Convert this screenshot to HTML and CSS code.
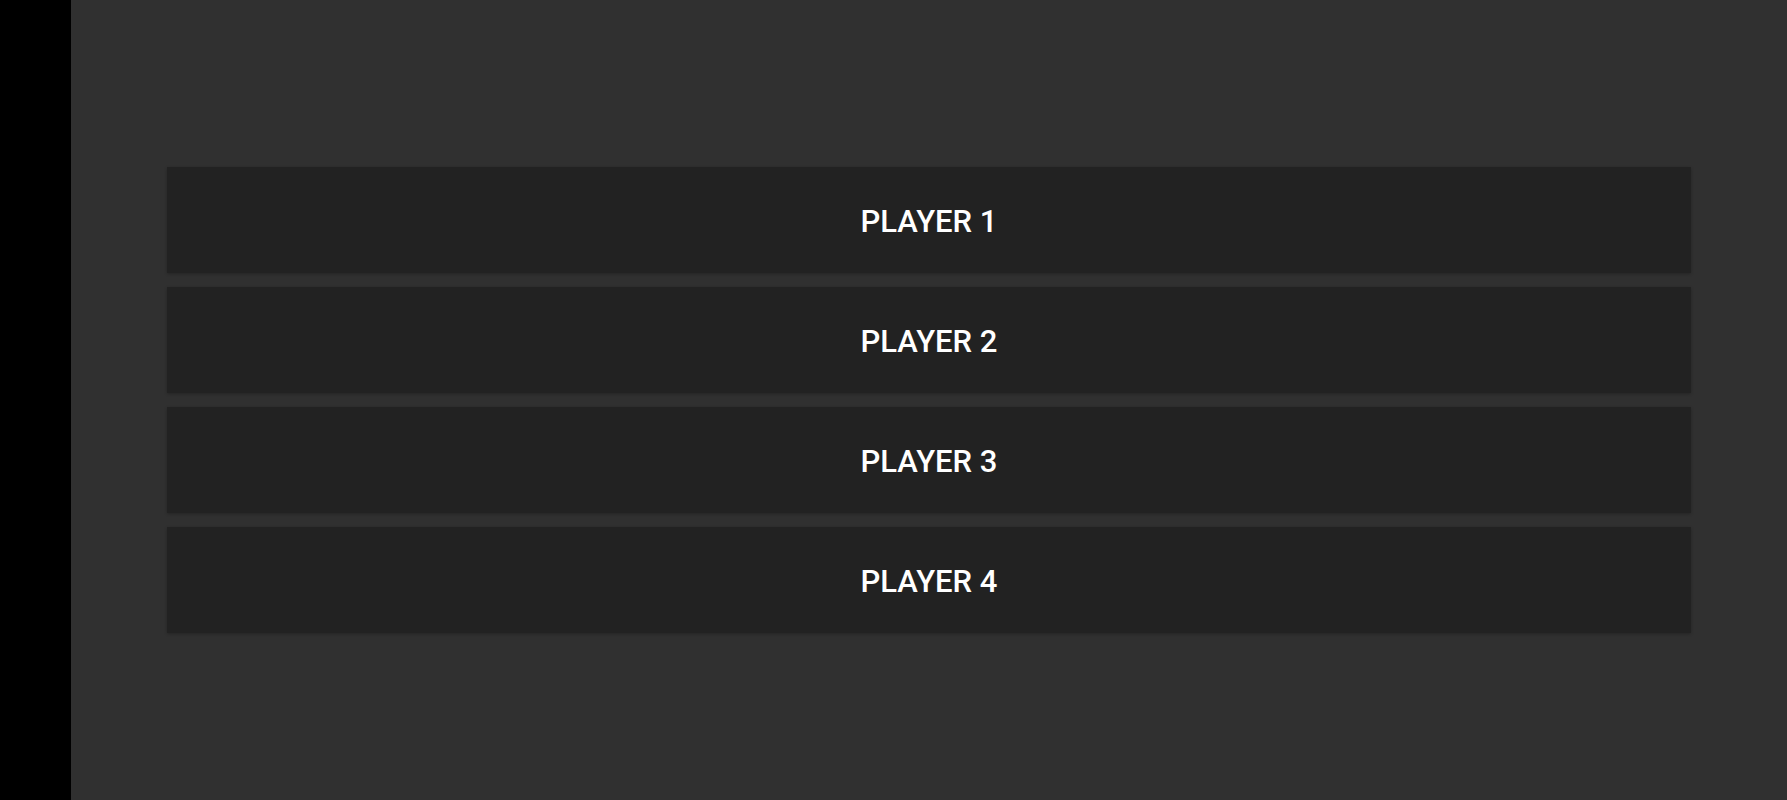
FILE: index.html
```html
<!DOCTYPE html>
<html>
<head>
<meta charset="utf-8">
<link rel="stylesheet" href="styles.css">
</head>
<body>
<div class="app">
  <div class="strip"></div>
  <main class="content">
    <div class="players">
      <button class="player">PLAYER 1</button>
      <button class="player">PLAYER 2</button>
      <button class="player">PLAYER 3</button>
      <button class="player">PLAYER 4</button>
    </div>
  </main>
</div>
</body>
</html>
```
FILE: styles.css
```css
html, body {
  margin: 0;
  padding: 0;
  height: 100%;
  background: #303030;
  overflow: hidden;
}
.app {
  display: flex;
  height: 800px;
}
.strip {
  width: 71px;
  flex: none;
  background: #000;
}
.content {
  flex: 1;
  background: #303030;
  padding: 167px 96px 0 96px;
}
.players {
  display: flex;
  flex-direction: column;
  gap: 14px;
}
.player {
  height: 106px;
  border: none;
  margin: 0;
  padding: 2px 0 0 0;
  background: #222222;
  color: #ffffff;
  font-family: Roboto, "Noto Sans", sans-serif;
  font-weight: 500;
  font-size: 31px;
  box-shadow: 0 1px 3px rgba(0,0,0,0.25);
  cursor: pointer;
}
```
